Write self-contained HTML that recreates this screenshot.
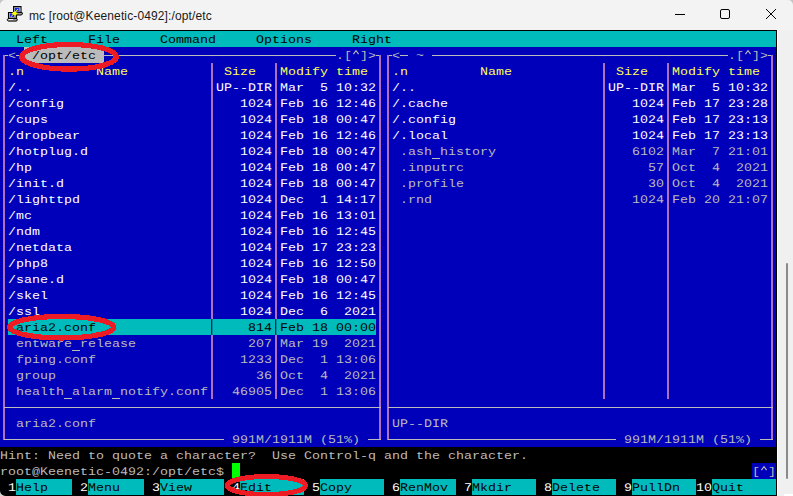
<!DOCTYPE html>
<html><head><meta charset="utf-8"><style>
html,body{margin:0;padding:0;}
body{width:793px;height:496px;overflow:hidden;position:relative;background:#f3f3f3;}
#t div{position:absolute;}
.t{position:absolute;font-family:"Liberation Mono",monospace;font-size:13.333px;line-height:16px;white-space:pre;transform:scaleY(0.86);transform-origin:0 12px;}
.b{font-weight:bold;}
.t2{position:absolute;font-family:"Liberation Mono",monospace;font-size:13.333px;line-height:16px;white-space:pre;transform:scaleY(0.88);transform-origin:0 12px;text-rendering:geometricPrecision;}
</style></head><body>
<svg style="position:absolute;left:0;top:0" width="40" height="30" viewBox="0 0 40 30">
<path d="M13.6 6.6 H21 V12.8 H13.6 Z" fill="#c8c8c8" stroke="#000" stroke-width="1.1"/>
<rect x="19" y="7.3" width="1.6" height="5" fill="#8c8c8c"/>
<rect x="14.8" y="7.9" width="4.1" height="3.6" fill="#1428e6"/>
<path d="M16.5 12.4 H22 Q22.9 12.9 22.3 14 L21.5 15 H16.5 Z" fill="#9a9a9a" stroke="#000" stroke-width="1"/>
<path d="M8.5 12.5 H16.5 V18.4 H8.5 Z" fill="#c8c8c8" stroke="#000" stroke-width="1.1"/>
<rect x="14.3" y="13.2" width="1.8" height="5" fill="#8c8c8c"/>
<rect x="9.8" y="13.3" width="4.2" height="3.7" fill="#1428e6"/>
<path d="M8 18.6 H16.8 L17.3 19.8 L16.6 21.1 H8.2 Q7 20.6 7.3 19.4 Z" fill="#a8a8a8" stroke="#000" stroke-width="1"/>
<rect x="8.6" y="19" width="4.4" height="0.9" fill="#f4f4f4"/>
<path d="M11 16.8 L18 9" stroke="#ffff00" stroke-width="1"/>
<path d="M11.5 13.4 L14 11.4 L18 13 L15.5 15.4 Z" fill="#ffff00"/>
</svg>
<span style="position:absolute;left:29px;top:8px;font:12px/16px 'Liberation Sans',sans-serif;letter-spacing:0.12px;color:#1a1a1a;white-space:pre">mc [root@Keenetic-0492]:/opt/etc</span>
<svg style="position:absolute;left:660px;top:0" width="133" height="30" viewBox="660 0 133 30">
<rect x="675" y="14" width="10" height="1" fill="#000"/>
<rect x="720.5" y="9.5" width="9" height="9" rx="1.5" fill="none" stroke="#000" stroke-width="1"/>
<path d="M766 9 L776 19 M776 9 L766 19" stroke="#000" stroke-width="1"/>
</svg>
<div style="position:absolute;left:777px;top:30px;width:1px;height:466px;background:#fff"></div>
<div style="position:absolute;left:778px;top:30px;width:15px;height:466px;background:#f0f0f0"></div>
<div style="position:absolute;left:786px;top:263px;width:2px;height:216px;background:#8a8a8a;border-radius:1px"></div>
<div style="position:absolute;left:784px;top:494px;width:9px;height:2px;background:#fff"></div>

<div id="t">
<div style="left:0px;top:30px;width:777px;height:466px;background:#000000;"></div>
<div style="left:0px;top:31px;width:776px;height:16px;background:#00bbbb;"></div>
<span class="t2" style="left:16px;top:33px;color:#000000">L</span>
<span class="t" style="left:24px;top:32px;color:#000000">eft</span>
<span class="t2" style="left:88px;top:33px;color:#000000">F</span>
<span class="t" style="left:96px;top:32px;color:#000000">ile</span>
<span class="t2" style="left:160px;top:33px;color:#000000">C</span>
<span class="t" style="left:168px;top:32px;color:#000000">ommand</span>
<span class="t2" style="left:256px;top:33px;color:#000000">O</span>
<span class="t" style="left:264px;top:32px;color:#000000">ptions</span>
<span class="t2" style="left:352px;top:33px;color:#000000">R</span>
<span class="t" style="left:360px;top:32px;color:#000000">ight</span>
<div style="left:0px;top:47px;width:776px;height:400px;background:#0000bb;"></div>
<div style="left:4px;top:55px;width:4px;height:1px;background:#bbbbbb;"></div>
<div style="left:3px;top:55px;width:1px;height:385px;background:#5a9cb4;"></div>
<div style="left:4px;top:55px;width:1px;height:385px;background:#b06ec0;"></div>
<span class="t" style="left:8px;top:48px;color:#bbbbbb">&lt;</span>
<div style="left:16px;top:55px;width:8px;height:1px;background:#bbbbbb;"></div>
<div style="left:24px;top:47px;width:80px;height:16px;background:#bbbbbb;"></div>
<span class="t" style="left:24px;top:48px;color:#000000"> /opt/etc </span>
<div style="left:104px;top:55px;width:232px;height:1px;background:#bbbbbb;"></div>
<svg style="position:absolute;left:352px;top:47px" width="8" height="16"><path d="M1.4 7.2 L4 3.7 L6.6 7.2" stroke="#bbbbbb" stroke-width="1.1" fill="none"/></svg>
<span class="t" style="left:336px;top:48px;color:#bbbbbb">.[ ]&gt;</span>
<div style="left:376px;top:55px;width:5px;height:1px;background:#bbbbbb;"></div>
<div style="left:379px;top:55px;width:1px;height:385px;background:#5a9cb4;"></div>
<div style="left:380px;top:55px;width:1px;height:385px;background:#b06ec0;"></div>
<span class="t" style="left:8px;top:64px;color:#ffff55">.n</span>
<span class="t2" style="left:96px;top:65px;color:#ffff55">N</span>
<span class="t" style="left:104px;top:64px;color:#ffff55">ame</span>
<span class="t2" style="left:224px;top:65px;color:#ffff55">S</span>
<span class="t" style="left:232px;top:64px;color:#ffff55">ize</span>
<span class="t2" style="left:280px;top:65px;color:#ffff55">M</span>
<span class="t" style="left:288px;top:64px;color:#ffff55">odify time</span>
<span class="t" style="left:8px;top:80px;color:#ffffff">/..</span>
<span class="t2" style="left:216px;top:81px;color:#ffffff">UP</span>
<span class="t" style="left:232px;top:80px;color:#ffffff">--</span>
<span class="t2" style="left:248px;top:81px;color:#ffffff">DIR</span>
<span class="t2" style="left:280px;top:81px;color:#ffffff">M</span>
<span class="t" style="left:288px;top:80px;color:#ffffff">ar  </span>
<span class="t2" style="left:320px;top:81px;color:#ffffff">5</span>
<span class="t2" style="left:336px;top:81px;color:#ffffff">10</span>
<span class="t" style="left:352px;top:80px;color:#ffffff">:</span>
<span class="t2" style="left:360px;top:81px;color:#ffffff">32</span>
<div style="left:347px;top:86px;width:2px;height:1px;background:#0000bb;"></div>
<span class="t" style="left:8px;top:96px;color:#ffffff">/config</span>
<span class="t2" style="left:240px;top:97px;color:#ffffff">1024</span>
<div style="left:251px;top:102px;width:2px;height:1px;background:#0000bb;"></div>
<span class="t2" style="left:280px;top:97px;color:#ffffff">F</span>
<span class="t" style="left:288px;top:96px;color:#ffffff">eb </span>
<span class="t2" style="left:312px;top:97px;color:#ffffff">16</span>
<span class="t2" style="left:336px;top:97px;color:#ffffff">12</span>
<span class="t" style="left:352px;top:96px;color:#ffffff">:</span>
<span class="t2" style="left:360px;top:97px;color:#ffffff">46</span>
<span class="t" style="left:8px;top:112px;color:#ffffff">/cups</span>
<span class="t2" style="left:240px;top:113px;color:#ffffff">1024</span>
<div style="left:251px;top:118px;width:2px;height:1px;background:#0000bb;"></div>
<span class="t2" style="left:280px;top:113px;color:#ffffff">F</span>
<span class="t" style="left:288px;top:112px;color:#ffffff">eb </span>
<span class="t2" style="left:312px;top:113px;color:#ffffff">18</span>
<span class="t2" style="left:336px;top:113px;color:#ffffff">00</span>
<span class="t" style="left:352px;top:112px;color:#ffffff">:</span>
<span class="t2" style="left:360px;top:113px;color:#ffffff">47</span>
<div style="left:339px;top:118px;width:2px;height:1px;background:#0000bb;"></div>
<div style="left:347px;top:118px;width:2px;height:1px;background:#0000bb;"></div>
<span class="t" style="left:8px;top:128px;color:#ffffff">/dropbear</span>
<span class="t2" style="left:240px;top:129px;color:#ffffff">1024</span>
<div style="left:251px;top:134px;width:2px;height:1px;background:#0000bb;"></div>
<span class="t2" style="left:280px;top:129px;color:#ffffff">F</span>
<span class="t" style="left:288px;top:128px;color:#ffffff">eb </span>
<span class="t2" style="left:312px;top:129px;color:#ffffff">16</span>
<span class="t2" style="left:336px;top:129px;color:#ffffff">12</span>
<span class="t" style="left:352px;top:128px;color:#ffffff">:</span>
<span class="t2" style="left:360px;top:129px;color:#ffffff">46</span>
<span class="t" style="left:8px;top:144px;color:#ffffff">/hotplug.d</span>
<span class="t2" style="left:240px;top:145px;color:#ffffff">1024</span>
<div style="left:251px;top:150px;width:2px;height:1px;background:#0000bb;"></div>
<span class="t2" style="left:280px;top:145px;color:#ffffff">F</span>
<span class="t" style="left:288px;top:144px;color:#ffffff">eb </span>
<span class="t2" style="left:312px;top:145px;color:#ffffff">18</span>
<span class="t2" style="left:336px;top:145px;color:#ffffff">00</span>
<span class="t" style="left:352px;top:144px;color:#ffffff">:</span>
<span class="t2" style="left:360px;top:145px;color:#ffffff">47</span>
<div style="left:339px;top:150px;width:2px;height:1px;background:#0000bb;"></div>
<div style="left:347px;top:150px;width:2px;height:1px;background:#0000bb;"></div>
<span class="t" style="left:8px;top:160px;color:#ffffff">/hp</span>
<span class="t2" style="left:240px;top:161px;color:#ffffff">1024</span>
<div style="left:251px;top:166px;width:2px;height:1px;background:#0000bb;"></div>
<span class="t2" style="left:280px;top:161px;color:#ffffff">F</span>
<span class="t" style="left:288px;top:160px;color:#ffffff">eb </span>
<span class="t2" style="left:312px;top:161px;color:#ffffff">18</span>
<span class="t2" style="left:336px;top:161px;color:#ffffff">00</span>
<span class="t" style="left:352px;top:160px;color:#ffffff">:</span>
<span class="t2" style="left:360px;top:161px;color:#ffffff">47</span>
<div style="left:339px;top:166px;width:2px;height:1px;background:#0000bb;"></div>
<div style="left:347px;top:166px;width:2px;height:1px;background:#0000bb;"></div>
<span class="t" style="left:8px;top:176px;color:#ffffff">/init.d</span>
<span class="t2" style="left:240px;top:177px;color:#ffffff">1024</span>
<div style="left:251px;top:182px;width:2px;height:1px;background:#0000bb;"></div>
<span class="t2" style="left:280px;top:177px;color:#ffffff">F</span>
<span class="t" style="left:288px;top:176px;color:#ffffff">eb </span>
<span class="t2" style="left:312px;top:177px;color:#ffffff">18</span>
<span class="t2" style="left:336px;top:177px;color:#ffffff">00</span>
<span class="t" style="left:352px;top:176px;color:#ffffff">:</span>
<span class="t2" style="left:360px;top:177px;color:#ffffff">47</span>
<div style="left:339px;top:182px;width:2px;height:1px;background:#0000bb;"></div>
<div style="left:347px;top:182px;width:2px;height:1px;background:#0000bb;"></div>
<span class="t" style="left:8px;top:192px;color:#ffffff">/lighttpd</span>
<span class="t2" style="left:240px;top:193px;color:#ffffff">1024</span>
<div style="left:251px;top:198px;width:2px;height:1px;background:#0000bb;"></div>
<span class="t2" style="left:280px;top:193px;color:#ffffff">D</span>
<span class="t" style="left:288px;top:192px;color:#ffffff">ec  </span>
<span class="t2" style="left:320px;top:193px;color:#ffffff">1</span>
<span class="t2" style="left:336px;top:193px;color:#ffffff">14</span>
<span class="t" style="left:352px;top:192px;color:#ffffff">:</span>
<span class="t2" style="left:360px;top:193px;color:#ffffff">17</span>
<span class="t" style="left:8px;top:208px;color:#ffffff">/mc</span>
<span class="t2" style="left:240px;top:209px;color:#ffffff">1024</span>
<div style="left:251px;top:214px;width:2px;height:1px;background:#0000bb;"></div>
<span class="t2" style="left:280px;top:209px;color:#ffffff">F</span>
<span class="t" style="left:288px;top:208px;color:#ffffff">eb </span>
<span class="t2" style="left:312px;top:209px;color:#ffffff">16</span>
<span class="t2" style="left:336px;top:209px;color:#ffffff">13</span>
<span class="t" style="left:352px;top:208px;color:#ffffff">:</span>
<span class="t2" style="left:360px;top:209px;color:#ffffff">01</span>
<div style="left:363px;top:214px;width:2px;height:1px;background:#0000bb;"></div>
<span class="t" style="left:8px;top:224px;color:#ffffff">/ndm</span>
<span class="t2" style="left:240px;top:225px;color:#ffffff">1024</span>
<div style="left:251px;top:230px;width:2px;height:1px;background:#0000bb;"></div>
<span class="t2" style="left:280px;top:225px;color:#ffffff">F</span>
<span class="t" style="left:288px;top:224px;color:#ffffff">eb </span>
<span class="t2" style="left:312px;top:225px;color:#ffffff">16</span>
<span class="t2" style="left:336px;top:225px;color:#ffffff">12</span>
<span class="t" style="left:352px;top:224px;color:#ffffff">:</span>
<span class="t2" style="left:360px;top:225px;color:#ffffff">45</span>
<span class="t" style="left:8px;top:240px;color:#ffffff">/netdata</span>
<span class="t2" style="left:240px;top:241px;color:#ffffff">1024</span>
<div style="left:251px;top:246px;width:2px;height:1px;background:#0000bb;"></div>
<span class="t2" style="left:280px;top:241px;color:#ffffff">F</span>
<span class="t" style="left:288px;top:240px;color:#ffffff">eb </span>
<span class="t2" style="left:312px;top:241px;color:#ffffff">17</span>
<span class="t2" style="left:336px;top:241px;color:#ffffff">23</span>
<span class="t" style="left:352px;top:240px;color:#ffffff">:</span>
<span class="t2" style="left:360px;top:241px;color:#ffffff">23</span>
<span class="t" style="left:8px;top:256px;color:#ffffff">/php</span>
<span class="t2" style="left:40px;top:257px;color:#ffffff">8</span>
<span class="t2" style="left:240px;top:257px;color:#ffffff">1024</span>
<div style="left:251px;top:262px;width:2px;height:1px;background:#0000bb;"></div>
<span class="t2" style="left:280px;top:257px;color:#ffffff">F</span>
<span class="t" style="left:288px;top:256px;color:#ffffff">eb </span>
<span class="t2" style="left:312px;top:257px;color:#ffffff">16</span>
<span class="t2" style="left:336px;top:257px;color:#ffffff">12</span>
<span class="t" style="left:352px;top:256px;color:#ffffff">:</span>
<span class="t2" style="left:360px;top:257px;color:#ffffff">50</span>
<div style="left:371px;top:262px;width:2px;height:1px;background:#0000bb;"></div>
<span class="t" style="left:8px;top:272px;color:#ffffff">/sane.d</span>
<span class="t2" style="left:240px;top:273px;color:#ffffff">1024</span>
<div style="left:251px;top:278px;width:2px;height:1px;background:#0000bb;"></div>
<span class="t2" style="left:280px;top:273px;color:#ffffff">F</span>
<span class="t" style="left:288px;top:272px;color:#ffffff">eb </span>
<span class="t2" style="left:312px;top:273px;color:#ffffff">18</span>
<span class="t2" style="left:336px;top:273px;color:#ffffff">00</span>
<span class="t" style="left:352px;top:272px;color:#ffffff">:</span>
<span class="t2" style="left:360px;top:273px;color:#ffffff">47</span>
<div style="left:339px;top:278px;width:2px;height:1px;background:#0000bb;"></div>
<div style="left:347px;top:278px;width:2px;height:1px;background:#0000bb;"></div>
<span class="t" style="left:8px;top:288px;color:#ffffff">/skel</span>
<span class="t2" style="left:240px;top:289px;color:#ffffff">1024</span>
<div style="left:251px;top:294px;width:2px;height:1px;background:#0000bb;"></div>
<span class="t2" style="left:280px;top:289px;color:#ffffff">F</span>
<span class="t" style="left:288px;top:288px;color:#ffffff">eb </span>
<span class="t2" style="left:312px;top:289px;color:#ffffff">16</span>
<span class="t2" style="left:336px;top:289px;color:#ffffff">12</span>
<span class="t" style="left:352px;top:288px;color:#ffffff">:</span>
<span class="t2" style="left:360px;top:289px;color:#ffffff">45</span>
<span class="t" style="left:8px;top:304px;color:#ffffff">/ssl</span>
<span class="t2" style="left:240px;top:305px;color:#ffffff">1024</span>
<div style="left:251px;top:310px;width:2px;height:1px;background:#0000bb;"></div>
<span class="t2" style="left:280px;top:305px;color:#ffffff">D</span>
<span class="t" style="left:288px;top:304px;color:#ffffff">ec  </span>
<span class="t2" style="left:320px;top:305px;color:#ffffff">6</span>
<span class="t2" style="left:344px;top:305px;color:#ffffff">2021</span>
<div style="left:355px;top:310px;width:2px;height:1px;background:#0000bb;"></div>
<div style="left:8px;top:319px;width:368px;height:16px;background:#00bbbb;"></div>
<span class="t" style="left:8px;top:320px;color:#000000"> aria</span>
<span class="t2" style="left:48px;top:321px;color:#000000">2</span>
<span class="t" style="left:56px;top:320px;color:#000000">.conf</span>
<span class="t2" style="left:248px;top:321px;color:#000000">814</span>
<span class="t2" style="left:280px;top:321px;color:#000000">F</span>
<span class="t" style="left:288px;top:320px;color:#000000">eb </span>
<span class="t2" style="left:312px;top:321px;color:#000000">18</span>
<span class="t2" style="left:336px;top:321px;color:#000000">00</span>
<span class="t" style="left:352px;top:320px;color:#000000">:</span>
<span class="t2" style="left:360px;top:321px;color:#000000">00</span>
<div style="left:339px;top:326px;width:2px;height:1px;background:#00bbbb;"></div>
<div style="left:347px;top:326px;width:2px;height:1px;background:#00bbbb;"></div>
<div style="left:363px;top:326px;width:2px;height:1px;background:#00bbbb;"></div>
<div style="left:371px;top:326px;width:2px;height:1px;background:#00bbbb;"></div>
<div style="left:72px;top:350px;width:8px;height:1px;background:#bbbbbb;"></div>
<span class="t" style="left:8px;top:336px;color:#bbbbbb"> entware release</span>
<span class="t2" style="left:248px;top:337px;color:#bbbbbb">207</span>
<div style="left:259px;top:342px;width:2px;height:1px;background:#0000bb;"></div>
<span class="t2" style="left:280px;top:337px;color:#bbbbbb">M</span>
<span class="t" style="left:288px;top:336px;color:#bbbbbb">ar </span>
<span class="t2" style="left:312px;top:337px;color:#bbbbbb">19</span>
<span class="t2" style="left:344px;top:337px;color:#bbbbbb">2021</span>
<div style="left:355px;top:342px;width:2px;height:1px;background:#0000bb;"></div>
<span class="t" style="left:8px;top:352px;color:#bbbbbb"> fping.conf</span>
<span class="t2" style="left:240px;top:353px;color:#bbbbbb">1233</span>
<span class="t2" style="left:280px;top:353px;color:#bbbbbb">D</span>
<span class="t" style="left:288px;top:352px;color:#bbbbbb">ec  </span>
<span class="t2" style="left:320px;top:353px;color:#bbbbbb">1</span>
<span class="t2" style="left:336px;top:353px;color:#bbbbbb">13</span>
<span class="t" style="left:352px;top:352px;color:#bbbbbb">:</span>
<span class="t2" style="left:360px;top:353px;color:#bbbbbb">06</span>
<div style="left:363px;top:358px;width:2px;height:1px;background:#0000bb;"></div>
<span class="t" style="left:8px;top:368px;color:#bbbbbb"> group</span>
<span class="t2" style="left:256px;top:369px;color:#bbbbbb">36</span>
<span class="t2" style="left:280px;top:369px;color:#bbbbbb">O</span>
<span class="t" style="left:288px;top:368px;color:#bbbbbb">ct  </span>
<span class="t2" style="left:320px;top:369px;color:#bbbbbb">4</span>
<span class="t2" style="left:344px;top:369px;color:#bbbbbb">2021</span>
<div style="left:355px;top:374px;width:2px;height:1px;background:#0000bb;"></div>
<div style="left:64px;top:398px;width:8px;height:1px;background:#bbbbbb;"></div>
<div style="left:112px;top:398px;width:8px;height:1px;background:#bbbbbb;"></div>
<span class="t" style="left:8px;top:384px;color:#bbbbbb"> health alarm notify.conf</span>
<span class="t2" style="left:232px;top:385px;color:#bbbbbb">46905</span>
<div style="left:259px;top:390px;width:2px;height:1px;background:#0000bb;"></div>
<span class="t2" style="left:280px;top:385px;color:#bbbbbb">D</span>
<span class="t" style="left:288px;top:384px;color:#bbbbbb">ec  </span>
<span class="t2" style="left:320px;top:385px;color:#bbbbbb">1</span>
<span class="t2" style="left:336px;top:385px;color:#bbbbbb">13</span>
<span class="t" style="left:352px;top:384px;color:#bbbbbb">:</span>
<span class="t2" style="left:360px;top:385px;color:#bbbbbb">06</span>
<div style="left:363px;top:390px;width:2px;height:1px;background:#0000bb;"></div>
<div style="left:211px;top:63px;width:1px;height:256px;background:#5a9cb4;"></div>
<div style="left:212px;top:63px;width:1px;height:256px;background:#b06ec0;"></div>
<div style="left:211px;top:319px;width:1px;height:16px;background:#003a18;"></div>
<div style="left:212px;top:319px;width:1px;height:16px;background:#008aa0;"></div>
<div style="left:211px;top:335px;width:1px;height:64px;background:#5a9cb4;"></div>
<div style="left:212px;top:335px;width:1px;height:64px;background:#b06ec0;"></div>
<div style="left:275px;top:63px;width:1px;height:256px;background:#5a9cb4;"></div>
<div style="left:276px;top:63px;width:1px;height:256px;background:#b06ec0;"></div>
<div style="left:275px;top:319px;width:1px;height:16px;background:#003a18;"></div>
<div style="left:276px;top:319px;width:1px;height:16px;background:#008aa0;"></div>
<div style="left:275px;top:335px;width:1px;height:64px;background:#5a9cb4;"></div>
<div style="left:276px;top:335px;width:1px;height:64px;background:#b06ec0;"></div>
<div style="left:4px;top:407px;width:377px;height:1px;background:#bbbbbb;"></div>
<div style="left:4px;top:439px;width:220px;height:1px;background:#bbbbbb;"></div>
<span class="t2" style="left:232px;top:433px;color:#bbbbbb">991M</span>
<span class="t" style="left:264px;top:432px;color:#bbbbbb">/</span>
<span class="t2" style="left:272px;top:433px;color:#bbbbbb">1911M</span>
<span class="t" style="left:312px;top:432px;color:#bbbbbb"> (</span>
<span class="t2" style="left:328px;top:433px;color:#bbbbbb">51</span>
<span class="t" style="left:344px;top:432px;color:#bbbbbb">%)</span>
<div style="left:368px;top:439px;width:13px;height:1px;background:#bbbbbb;"></div>
<span class="t" style="left:16px;top:416px;color:#bbbbbb">aria</span>
<span class="t2" style="left:48px;top:417px;color:#bbbbbb">2</span>
<span class="t" style="left:56px;top:416px;color:#bbbbbb">.conf</span>
<div style="left:388px;top:55px;width:4px;height:1px;background:#bbbbbb;"></div>
<div style="left:387px;top:55px;width:1px;height:385px;background:#5a9cb4;"></div>
<div style="left:388px;top:55px;width:1px;height:385px;background:#b06ec0;"></div>
<span class="t" style="left:392px;top:48px;color:#bbbbbb">&lt;</span>
<div style="left:400px;top:55px;width:8px;height:1px;background:#bbbbbb;"></div>
<span class="t" style="left:408px;top:48px;color:#bbbbbb"> ~ </span>
<div style="left:432px;top:55px;width:296px;height:1px;background:#bbbbbb;"></div>
<svg style="position:absolute;left:744px;top:47px" width="8" height="16"><path d="M1.4 7.2 L4 3.7 L6.6 7.2" stroke="#bbbbbb" stroke-width="1.1" fill="none"/></svg>
<span class="t" style="left:728px;top:48px;color:#bbbbbb">.[ ]&gt;</span>
<div style="left:768px;top:55px;width:5px;height:1px;background:#bbbbbb;"></div>
<div style="left:771px;top:55px;width:1px;height:385px;background:#5a9cb4;"></div>
<div style="left:772px;top:55px;width:1px;height:385px;background:#b06ec0;"></div>
<span class="t" style="left:392px;top:64px;color:#ffff55">.n</span>
<span class="t2" style="left:480px;top:65px;color:#ffff55">N</span>
<span class="t" style="left:488px;top:64px;color:#ffff55">ame</span>
<span class="t2" style="left:616px;top:65px;color:#ffff55">S</span>
<span class="t" style="left:624px;top:64px;color:#ffff55">ize</span>
<span class="t2" style="left:672px;top:65px;color:#ffff55">M</span>
<span class="t" style="left:680px;top:64px;color:#ffff55">odify time</span>
<span class="t" style="left:392px;top:80px;color:#ffffff">/..</span>
<span class="t2" style="left:608px;top:81px;color:#ffffff">UP</span>
<span class="t" style="left:624px;top:80px;color:#ffffff">--</span>
<span class="t2" style="left:640px;top:81px;color:#ffffff">DIR</span>
<span class="t2" style="left:672px;top:81px;color:#ffffff">M</span>
<span class="t" style="left:680px;top:80px;color:#ffffff">ar  </span>
<span class="t2" style="left:712px;top:81px;color:#ffffff">5</span>
<span class="t2" style="left:728px;top:81px;color:#ffffff">10</span>
<span class="t" style="left:744px;top:80px;color:#ffffff">:</span>
<span class="t2" style="left:752px;top:81px;color:#ffffff">32</span>
<div style="left:739px;top:86px;width:2px;height:1px;background:#0000bb;"></div>
<span class="t" style="left:392px;top:96px;color:#ffffff">/.cache</span>
<span class="t2" style="left:632px;top:97px;color:#ffffff">1024</span>
<div style="left:643px;top:102px;width:2px;height:1px;background:#0000bb;"></div>
<span class="t2" style="left:672px;top:97px;color:#ffffff">F</span>
<span class="t" style="left:680px;top:96px;color:#ffffff">eb </span>
<span class="t2" style="left:704px;top:97px;color:#ffffff">17</span>
<span class="t2" style="left:728px;top:97px;color:#ffffff">23</span>
<span class="t" style="left:744px;top:96px;color:#ffffff">:</span>
<span class="t2" style="left:752px;top:97px;color:#ffffff">28</span>
<span class="t" style="left:392px;top:112px;color:#ffffff">/.config</span>
<span class="t2" style="left:632px;top:113px;color:#ffffff">1024</span>
<div style="left:643px;top:118px;width:2px;height:1px;background:#0000bb;"></div>
<span class="t2" style="left:672px;top:113px;color:#ffffff">F</span>
<span class="t" style="left:680px;top:112px;color:#ffffff">eb </span>
<span class="t2" style="left:704px;top:113px;color:#ffffff">17</span>
<span class="t2" style="left:728px;top:113px;color:#ffffff">23</span>
<span class="t" style="left:744px;top:112px;color:#ffffff">:</span>
<span class="t2" style="left:752px;top:113px;color:#ffffff">13</span>
<span class="t" style="left:392px;top:128px;color:#ffffff">/.local</span>
<span class="t2" style="left:632px;top:129px;color:#ffffff">1024</span>
<div style="left:643px;top:134px;width:2px;height:1px;background:#0000bb;"></div>
<span class="t2" style="left:672px;top:129px;color:#ffffff">F</span>
<span class="t" style="left:680px;top:128px;color:#ffffff">eb </span>
<span class="t2" style="left:704px;top:129px;color:#ffffff">17</span>
<span class="t2" style="left:728px;top:129px;color:#ffffff">23</span>
<span class="t" style="left:744px;top:128px;color:#ffffff">:</span>
<span class="t2" style="left:752px;top:129px;color:#ffffff">13</span>
<div style="left:432px;top:158px;width:8px;height:1px;background:#bbbbbb;"></div>
<span class="t" style="left:392px;top:144px;color:#bbbbbb"> .ash history</span>
<span class="t2" style="left:632px;top:145px;color:#bbbbbb">6102</span>
<div style="left:651px;top:150px;width:2px;height:1px;background:#0000bb;"></div>
<span class="t2" style="left:672px;top:145px;color:#bbbbbb">M</span>
<span class="t" style="left:680px;top:144px;color:#bbbbbb">ar  </span>
<span class="t2" style="left:712px;top:145px;color:#bbbbbb">7</span>
<span class="t2" style="left:728px;top:145px;color:#bbbbbb">21</span>
<span class="t" style="left:744px;top:144px;color:#bbbbbb">:</span>
<span class="t2" style="left:752px;top:145px;color:#bbbbbb">01</span>
<div style="left:755px;top:150px;width:2px;height:1px;background:#0000bb;"></div>
<span class="t" style="left:392px;top:160px;color:#bbbbbb"> .inputrc</span>
<span class="t2" style="left:648px;top:161px;color:#bbbbbb">57</span>
<span class="t2" style="left:672px;top:161px;color:#bbbbbb">O</span>
<span class="t" style="left:680px;top:160px;color:#bbbbbb">ct  </span>
<span class="t2" style="left:712px;top:161px;color:#bbbbbb">4</span>
<span class="t2" style="left:736px;top:161px;color:#bbbbbb">2021</span>
<div style="left:747px;top:166px;width:2px;height:1px;background:#0000bb;"></div>
<span class="t" style="left:392px;top:176px;color:#bbbbbb"> .profile</span>
<span class="t2" style="left:648px;top:177px;color:#bbbbbb">30</span>
<div style="left:659px;top:182px;width:2px;height:1px;background:#0000bb;"></div>
<span class="t2" style="left:672px;top:177px;color:#bbbbbb">O</span>
<span class="t" style="left:680px;top:176px;color:#bbbbbb">ct  </span>
<span class="t2" style="left:712px;top:177px;color:#bbbbbb">4</span>
<span class="t2" style="left:736px;top:177px;color:#bbbbbb">2021</span>
<div style="left:747px;top:182px;width:2px;height:1px;background:#0000bb;"></div>
<span class="t" style="left:392px;top:192px;color:#bbbbbb"> .rnd</span>
<span class="t2" style="left:632px;top:193px;color:#bbbbbb">1024</span>
<div style="left:643px;top:198px;width:2px;height:1px;background:#0000bb;"></div>
<span class="t2" style="left:672px;top:193px;color:#bbbbbb">F</span>
<span class="t" style="left:680px;top:192px;color:#bbbbbb">eb </span>
<span class="t2" style="left:704px;top:193px;color:#bbbbbb">20</span>
<span class="t2" style="left:728px;top:193px;color:#bbbbbb">21</span>
<span class="t" style="left:744px;top:192px;color:#bbbbbb">:</span>
<span class="t2" style="left:752px;top:193px;color:#bbbbbb">07</span>
<div style="left:715px;top:198px;width:2px;height:1px;background:#0000bb;"></div>
<div style="left:755px;top:198px;width:2px;height:1px;background:#0000bb;"></div>
<div style="left:603px;top:63px;width:1px;height:336px;background:#5a9cb4;"></div>
<div style="left:604px;top:63px;width:1px;height:336px;background:#b06ec0;"></div>
<div style="left:667px;top:63px;width:1px;height:336px;background:#5a9cb4;"></div>
<div style="left:668px;top:63px;width:1px;height:336px;background:#b06ec0;"></div>
<div style="left:388px;top:407px;width:385px;height:1px;background:#bbbbbb;"></div>
<div style="left:388px;top:439px;width:228px;height:1px;background:#bbbbbb;"></div>
<span class="t2" style="left:624px;top:433px;color:#bbbbbb">991M</span>
<span class="t" style="left:656px;top:432px;color:#bbbbbb">/</span>
<span class="t2" style="left:664px;top:433px;color:#bbbbbb">1911M</span>
<span class="t" style="left:704px;top:432px;color:#bbbbbb"> (</span>
<span class="t2" style="left:720px;top:433px;color:#bbbbbb">51</span>
<span class="t" style="left:736px;top:432px;color:#bbbbbb">%)</span>
<div style="left:760px;top:439px;width:13px;height:1px;background:#bbbbbb;"></div>
<span class="t2" style="left:392px;top:417px;color:#bbbbbb">UP</span>
<span class="t" style="left:408px;top:416px;color:#bbbbbb">--</span>
<span class="t2" style="left:424px;top:417px;color:#bbbbbb">DIR</span>
<span class="t2" style="left:0px;top:449px;color:#bbbbbb">H</span>
<span class="t" style="left:8px;top:448px;color:#bbbbbb">int: </span>
<span class="t2" style="left:48px;top:449px;color:#bbbbbb">N</span>
<span class="t" style="left:56px;top:448px;color:#bbbbbb">eed to quote a character?  </span>
<span class="t2" style="left:272px;top:449px;color:#bbbbbb">U</span>
<span class="t" style="left:280px;top:448px;color:#bbbbbb">se </span>
<span class="t2" style="left:304px;top:449px;color:#bbbbbb">C</span>
<span class="t" style="left:312px;top:448px;color:#bbbbbb">ontrol-q and the character.</span>
<span class="t" style="left:0px;top:464px;color:#bbbbbb">root@</span>
<span class="t2" style="left:40px;top:465px;color:#bbbbbb">K</span>
<span class="t" style="left:48px;top:464px;color:#bbbbbb">eenetic-</span>
<span class="t2" style="left:112px;top:465px;color:#bbbbbb">0492</span>
<span class="t" style="left:144px;top:464px;color:#bbbbbb">:/opt/etc$</span>
<div style="left:115px;top:470px;width:2px;height:1px;background:#000000;"></div>
<div style="left:232px;top:463px;width:8px;height:15px;background:#00ff00;"></div>
<div style="left:752px;top:463px;width:24px;height:16px;background:#0000bb;"></div>
<svg style="position:absolute;left:760px;top:463px" width="8" height="16"><path d="M1.4 7.2 L4 3.7 L6.6 7.2" stroke="#bbbbbb" stroke-width="1.1" fill="none"/></svg>
<span class="t" style="left:752px;top:464px;color:#bbbbbb">[ ]</span>
<span class="t2" style="left:8px;top:481px;color:#ffffff">1</span>
<div style="left:16px;top:479px;width:56px;height:16px;background:#00bbbb;"></div>
<span class="t2" style="left:16px;top:481px;color:#000000">H</span>
<span class="t" style="left:24px;top:480px;color:#000000">elp</span>
<span class="t2" style="left:80px;top:481px;color:#ffffff">2</span>
<div style="left:88px;top:479px;width:56px;height:16px;background:#00bbbb;"></div>
<span class="t2" style="left:88px;top:481px;color:#000000">M</span>
<span class="t" style="left:96px;top:480px;color:#000000">enu</span>
<span class="t2" style="left:152px;top:481px;color:#ffffff">3</span>
<div style="left:160px;top:479px;width:64px;height:16px;background:#00bbbb;"></div>
<span class="t2" style="left:160px;top:481px;color:#000000">V</span>
<span class="t" style="left:168px;top:480px;color:#000000">iew</span>
<span class="t2" style="left:232px;top:481px;color:#ffffff">4</span>
<div style="left:240px;top:479px;width:64px;height:16px;background:#00bbbb;"></div>
<span class="t2" style="left:240px;top:481px;color:#000000">E</span>
<span class="t" style="left:248px;top:480px;color:#000000">dit</span>
<span class="t2" style="left:312px;top:481px;color:#ffffff">5</span>
<div style="left:320px;top:479px;width:64px;height:16px;background:#00bbbb;"></div>
<span class="t2" style="left:320px;top:481px;color:#000000">C</span>
<span class="t" style="left:328px;top:480px;color:#000000">opy</span>
<span class="t2" style="left:392px;top:481px;color:#ffffff">6</span>
<div style="left:400px;top:479px;width:56px;height:16px;background:#00bbbb;"></div>
<span class="t2" style="left:400px;top:481px;color:#000000">R</span>
<span class="t" style="left:408px;top:480px;color:#000000">en</span>
<span class="t2" style="left:424px;top:481px;color:#000000">M</span>
<span class="t" style="left:432px;top:480px;color:#000000">ov</span>
<span class="t2" style="left:464px;top:481px;color:#ffffff">7</span>
<div style="left:472px;top:479px;width:64px;height:16px;background:#00bbbb;"></div>
<span class="t2" style="left:472px;top:481px;color:#000000">M</span>
<span class="t" style="left:480px;top:480px;color:#000000">kdir</span>
<span class="t2" style="left:544px;top:481px;color:#ffffff">8</span>
<div style="left:552px;top:479px;width:64px;height:16px;background:#00bbbb;"></div>
<span class="t2" style="left:552px;top:481px;color:#000000">D</span>
<span class="t" style="left:560px;top:480px;color:#000000">elete</span>
<span class="t2" style="left:624px;top:481px;color:#ffffff">9</span>
<div style="left:632px;top:479px;width:64px;height:16px;background:#00bbbb;"></div>
<span class="t2" style="left:632px;top:481px;color:#000000">P</span>
<span class="t" style="left:640px;top:480px;color:#000000">ull</span>
<span class="t2" style="left:664px;top:481px;color:#000000">D</span>
<span class="t" style="left:672px;top:480px;color:#000000">n</span>
<span class="t2" style="left:696px;top:481px;color:#ffffff">10</span>
<div style="left:707px;top:486px;width:2px;height:1px;background:#000000;"></div>
<div style="left:712px;top:479px;width:64px;height:16px;background:#00bbbb;"></div>
<span class="t2" style="left:712px;top:481px;color:#000000">Q</span>
<span class="t" style="left:720px;top:480px;color:#000000">uit</span>
</div>
<svg style="position:absolute;left:0;top:0" width="793" height="496" viewBox="0 0 793 496" shape-rendering="crispEdges">
<ellipse cx="69" cy="56.8" rx="47.2" ry="12.3" fill="none" stroke="#ed1c24" stroke-width="5.2"/>
<ellipse cx="61.7" cy="327.2" rx="52" ry="10.75" fill="none" stroke="#ed1c24" stroke-width="5.2"/>
<ellipse cx="266.4" cy="485.5" rx="39.1" ry="9" fill="none" stroke="#ed1c24" stroke-width="5"/>
</svg>
<svg style="position:absolute;left:0;top:0" width="793" height="496" viewBox="0 0 793 496">
<defs>
<radialGradient id="tl" cx="7" cy="7" r="7" gradientUnits="userSpaceOnUse"><stop offset="0.75" stop-color="#f2f2f2" stop-opacity="0"/><stop offset="1" stop-color="#b4b4b4"/></radialGradient>
<radialGradient id="tr" cx="786" cy="7" r="7" gradientUnits="userSpaceOnUse"><stop offset="0.75" stop-color="#f2f2f2" stop-opacity="0"/><stop offset="1" stop-color="#b4b4b4"/></radialGradient>
</defs>
<path d="M0 0 H5 A5 5 0 0 0 0 5 Z" fill="#c4c4c4"/>
<path d="M793 0 H788 A5 5 0 0 1 793 5 Z" fill="#c4c4c4"/>
<path d="M0 496 V491 A5.5 5.5 0 0 0 5.5 496 Z" fill="#d4d4d4"/>
</svg>
</body></html>
